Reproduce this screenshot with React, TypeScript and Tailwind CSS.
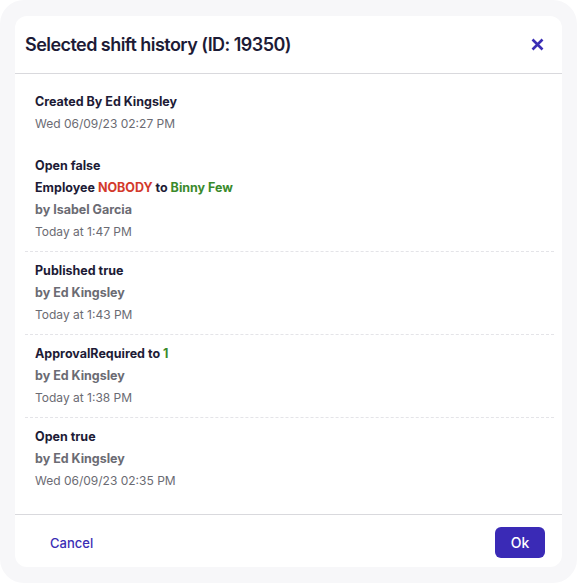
import React from "react";

const Item = ({ children, border }: { children: React.ReactNode; border?: boolean }) => (
  <div className={`px-[10px] py-2 ${border ? "border-t border-dashed border-[#e4e4e8]" : ""}`}>{children}</div>
);

const B = "font-bold text-[12.5px]";

export default function App() {
  const font = { fontFamily: "Inter, 'Noto Sans', sans-serif" };
  return (
    <div className="w-[577px] h-[583px] bg-white" style={font}>
      <div className="w-full h-full bg-[#f7f7f9] rounded-[24px] pt-4 px-[15px] pb-4">
        <div className="bg-white rounded-[12px] h-full flex flex-col">
          <div className="h-[58px] flex items-center justify-between pl-[10px] pr-[17px] border-b border-[#d9d9dd]">
            <h1 className="text-[18px] font-semibold text-[#1d1b36] tracking-[-0.55px]">Selected shift history (ID: 19350)</h1>
            <button className="w-[14px] h-[14px] flex items-center justify-center mr-[1px]">
              <svg width="13" height="13" viewBox="0 0 13 13">
                <path d="M1.5 1.5 L11.5 11.5 M11.5 1.5 L1.5 11.5" stroke="#3a2db5" strokeWidth="2.6" strokeLinecap="butt" />
              </svg>
            </button>
          </div>
          <div className="flex-1 pt-[17px] pl-[10px] pr-[8px] text-[12px] leading-[22px]">
            <div className="px-[10px] pb-3">
              <div className={`${B} text-[#1d1b36]`}>Created By Ed Kingsley</div>
              <div className="text-[#6b6b73]">Wed 06/09/23 02:27 PM</div>
            </div>
            <Item>
              <div className={`${B} text-[#1d1b36]`}>Open false</div>
              <div className={`${B} text-[#1d1b36]`}>
                Employee <span className="text-[#d33a2c]">NOBODY</span> to <span className="text-[#3a8a2c]">Binny Few</span>
              </div>
              <div className={`${B} text-[#6b6b73]`}>by Isabel Garcia</div>
              <div className="text-[#6b6b73]">Today at 1:47 PM</div>
            </Item>
            <Item border>
              <div className={`${B} text-[#1d1b36]`}>Published true</div>
              <div className={`${B} text-[#6b6b73]`}>by Ed Kingsley</div>
              <div className="text-[#6b6b73]">Today at 1:43 PM</div>
            </Item>
            <Item border>
              <div className={`${B} text-[#1d1b36]`}>
                ApprovalRequired to <span className="text-[#3a8a2c]">1</span>
              </div>
              <div className={`${B} text-[#6b6b73]`}>by Ed Kingsley</div>
              <div className="text-[#6b6b73]">Today at 1:38 PM</div>
            </Item>
            <Item border>
              <div className={`${B} text-[#1d1b36]`}>Open true</div>
              <div className={`${B} text-[#6b6b73]`}>by Ed Kingsley</div>
              <div className="text-[#6b6b73]">Wed 06/09/23 02:35 PM</div>
            </Item>
          </div>
          <div className="h-[53px] border-t border-[#d9d9dd] flex items-center justify-between pl-[20px] pr-[17px] pt-[2px]">
            <button className="text-[13px] text-[#3a2db5] font-medium px-[15px] h-[31px] mt-[3px]">Cancel</button>
            <button className="bg-[#3a2ab6] text-white text-[14px] font-medium rounded-[6px] w-[50px] h-[31px]">Ok</button>
          </div>
        </div>
      </div>
    </div>
  );
}
